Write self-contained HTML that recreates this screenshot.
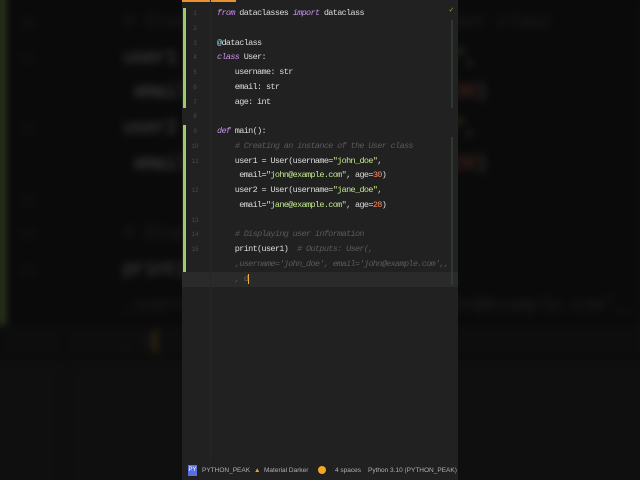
<!DOCTYPE html>
<html style="overflow:hidden;width:640px;height:480px"><head><meta charset="utf-8"><style>
*{margin:0;padding:0;box-sizing:border-box}
body{width:640px;height:480px;background:#0f0f0f;overflow:hidden;position:relative;font-family:"Liberation Mono",monospace}
#wrap{position:absolute;left:0;top:0;width:640px;height:480px;overflow:hidden}
.ed{position:absolute;width:276px;height:480px;background:#212121}
.ln{position:absolute;left:0;width:24px;text-align:center;font-size:6px;color:#4a4a4a}
.c{position:absolute;left:35px;font-size:8.5px;color:#dcdcdc;white-space:pre;letter-spacing:-0.65px}
.k{color:#c792ea;font-style:italic}
.s{color:#c3e88d}.n{color:#f78c6c}.cm{color:#5a5a5a;font-style:italic}
.bar{position:absolute;left:1px;width:3px;background:#9ccc65}
#bg{left:-4px;top:-328px;height:280px;transform:scale(2.4);transform-origin:0 0;filter:blur(1.5px) brightness(0.3)}
#fg{left:182px;top:0}
.status{position:absolute;left:182px;top:462px;width:276px;height:18px;background:#212121;font-family:"Liberation Sans",sans-serif;font-size:6.5px;color:#b0b0b0}
.status span{position:absolute;top:5px}
</style></head><body>
<div id="wrap">
<div class="ed" id="bg"></div>
<div class="ed" id="fg"></div>
<div class="status">
<span style="left:6px;top:3px;width:9px;height:11px;background:#5b6ee1;color:#fff;font-size:6px;text-align:center;line-height:11px">PY</span>
<span style="left:20px">PYTHON_PEAK</span>
<span style="left:72px;color:#f0a030">▲</span>
<span style="left:82px">Material Darker</span>
<span style="left:136px;top:4px;width:8px;height:8px;border-radius:50%;background:#f5a623"></span>
<span style="left:153px">4 spaces</span>
<span style="left:186px">Python 3.10 (PYTHON_PEAK)</span>
</div>
</div>
<script>
var L=[
[1,'<span class="k">from</span> dataclasses <span class="k">import</span> dataclass',0],
[2,'',0],[3,'<span style="color:#89ddff">@</span>dataclass',0],
[4,'<span class="k">class</span> User:',0],
[5,'    username: str',0],[6,'    email: str',0],[7,'    age: int',0],[8,'',0],
[9,'<span class="k">def</span> main():',0],
[10,'    <span class="cm"># Creating an instance of the User class</span>',0],
[11,'    user1 = User(username=<span class="s">"john_doe"</span>,',0],
['','     email=<span class="s">"john@example.com"</span>, age=<span class="n">30</span>)',0],
[12,'    user2 = User(username=<span class="s">"jane_doe"</span>,',0],
['','     email=<span class="s">"jane@example.com"</span>, age=<span class="n">28</span>)',0],
[13,'',0],
[14,'    <span class="cm"># Displaying user information</span>',0],
[15,'    print(user1)  <span class="cm"># Outputs: User(,</span>',0],
['','    <span class="cm">,username=\'john_doe\', email=\'john@example.com\',,</span>',0],
['','    <span class="cm">, </span><span style="color:#666">d</span><span style="border-left:1px solid #f0b030"></span>',0]
];
var h='<div style="position:absolute;left:0;top:0;width:54px;height:2px;background:#e8912d"></div>';
h+='<div class="bar" style="top:8px;height:100px"></div><div class="bar" style="top:125px;height:161px"></div>';
h+='<div style="position:absolute;left:0;top:272px;width:276px;height:15px;background:#2a2a2a"></div>';
h+='<div style="position:absolute;left:28px;top:0;width:1px;height:462px;background:#262626"></div>';
h+='<div style="position:absolute;left:269px;top:20px;width:2px;height:88px;background:#2e3a30"></div>';
h+='<div style="position:absolute;left:269px;top:137px;width:2px;height:148px;background:#2e3a30"></div>';
h+='<div style="position:absolute;left:267px;top:5px;font-size:8px;color:#7cb342">✓</div>';
for(var i=0;i<L.length;i++){var y=8+i*14.75;
h+='<div class="ln" style="top:'+(y+2)+'px;left:1px">'+L[i][0]+'</div><div class="c" style="top:'+y+'px">'+L[i][1]+'</div>';}
document.getElementById('fg').innerHTML=h;document.getElementById('bg').innerHTML=h;
</script>
</body></html>
